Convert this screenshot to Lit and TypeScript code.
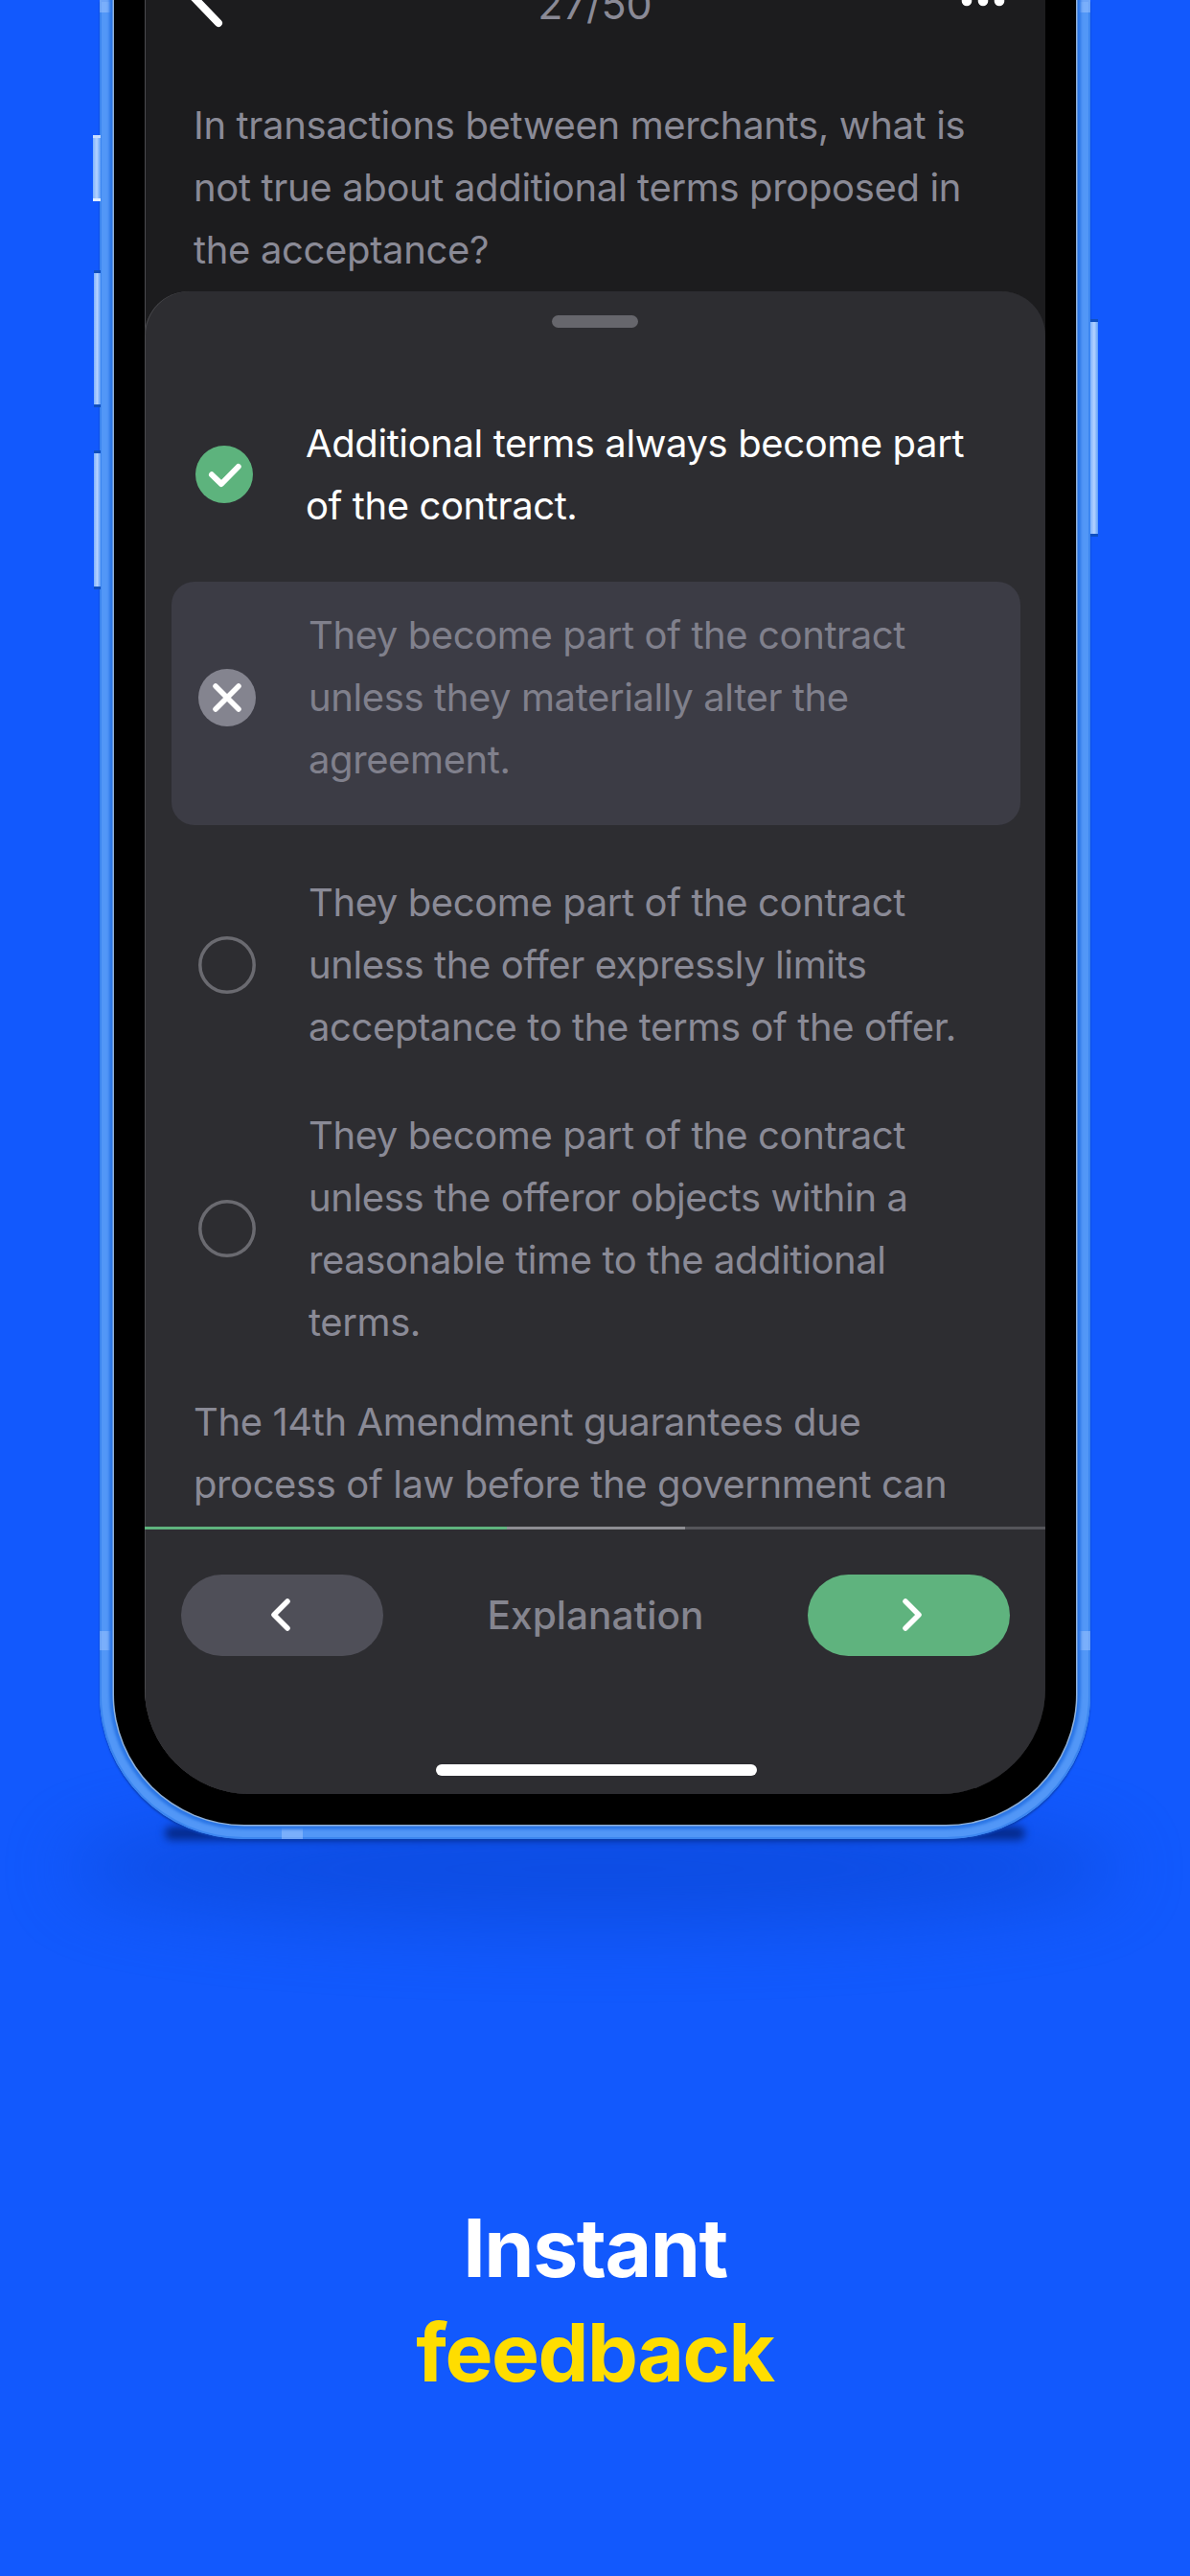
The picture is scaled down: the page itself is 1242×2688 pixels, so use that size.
import { LitElement, html, css, svg } from "lit";
import { customElement } from "lit/decorators.js";

@customElement("app-root")
export class AppRoot extends LitElement {
  static styles = css`
    :host {
      display: block;
      position: relative;
      width: 1242px;
      height: 2688px;
      overflow: hidden;
      background: #1259fd;
      font-family: Inter, "Noto Sans", sans-serif;
      -webkit-font-smoothing: antialiased;
    }
    .ground {
      position: absolute;
      left: 70px;
      top: 1890px;
      width: 1100px;
      height: 120px;
      background: #0a45d2;
      opacity: 0.6;
      border-radius: 50%;
      filter: blur(36px);
    }
    .contact {
      position: absolute;
      left: 172px;
      top: 1906px;
      width: 898px;
      height: 14px;
      background: #052a8c;
      border-radius: 8px;
      filter: blur(4px);
    }
    .phone {
      position: relative;
      box-sizing: border-box;
      width: 1034px;
      height: 1919px;
      margin-left: 104px;
      padding: 0 15px 15px;
      background: #5297f7;
      border-radius: 0 0 150px 150px;
      box-shadow: inset 0 0 0 2px #3c86f0, 0 2px 2px #0a3fb4;
    }
    .band {
      position: absolute;
      background: rgba(170, 205, 255, 0.45);
    }
    .band.tl { left: 0; top: 0; width: 15px; height: 13px; }
    .band.tr { right: 0; top: 0; width: 15px; height: 13px; }
    .band.ml { left: 0; top: 1702px; width: 15px; height: 20px; }
    .band.mr { right: 0; top: 1702px; width: 15px; height: 20px; }
    .band.bl { left: 190px; bottom: 0; width: 22px; height: 15px; }
    .side {
      position: absolute;
      background: linear-gradient(to right, #7fb2fc, #b4d2ff 50%, #5e9ef8);
      border-top: 3px solid #e3eeff;
      border-bottom: 3px solid #0f4fc0;
      box-sizing: border-box;
    }
    .side.s1 { left: -7px; top: 141px; width: 8px; height: 69px; border-top-color: #c9ddff; border-bottom-color: #e3eeff; }
    .side.s2 { left: -6px; top: 282px; width: 7px; height: 143px; border-top-color: #0f4fc0; }
    .side.s3 { left: -6px; top: 470px; width: 7px; height: 145px; border-top-color: #0f4fc0; }
    .side.s4 { right: -8px; top: 333px; width: 8px; height: 227px; border-top-color: #0f4fc0; }
    .bezel {
      box-sizing: border-box;
      height: 1904px;
      padding: 0 32px 32px;
      background: #000;
      border-radius: 0 0 136px 136px;
      position: relative;
      box-shadow: 0 0 0 1.5px #8fb0d8, 0 0 3px 5px #2b76e6;
    }
    .screen {
      display: flex;
      flex-direction: column;
      height: 1872px;
      background: #1c1c1e;
      border-radius: 0 0 110px 110px;
      overflow: hidden;
      box-shadow: inset 1px 0 0 #4a4a4e;
    }
    .top {
      position: relative;
      flex: none;
      height: 30px;
      overflow: hidden;
    }
    .top svg {
      position: absolute;
      left: 0;
      top: 0;
    }
    .count {
      position: absolute;
      left: 0;
      right: 0;
      bottom: 4px;
      text-align: center;
      line-height: 1;
      font-size: 43px;
      color: #8a8a96;
    }
    .question {
      flex: none;
      margin: 68px 0 11px;
      padding-left: 51px;
      font-size: 40px;
      letter-spacing: -0.35px;
      line-height: 65px;
      color: #8a8a96;
      height: 195px;
    }
    .sheet {
      flex: 1;
      display: flex;
      flex-direction: column;
      background: #2d2d31;
      border-radius: 46px 46px 0 0;
      box-shadow: inset 1px 0 0 #48484c;
      font-size: 40px;
      letter-spacing: -0.4px;
      line-height: 65px;
      color: #8a8a96;
    }
    .handle {
      align-self: center;
      width: 90px;
      height: 13px;
      margin-top: 25px;
      border-radius: 7px;
      background: #66666c;
    }
    .opt {
      display: flex;
      align-items: center;
    }
    .opt svg { flex: none; }
    .opt-text { margin-left: 55px; }
    .right {
      margin: 88px 0 0 53px;
      color: #fff;
    }
    .wrong {
      margin: 47px 26px 0 28px;
      padding: 23px 0 36px 28px;
      border-radius: 24px;
      background: #3c3c45;
      color: #80808c;
    }
    .plain { margin-left: 56px; }
    .third { margin-top: 48px; }
    .fourth { margin-top: 48px; }
    .explain {
      margin: 39px 0 0 51px;
    }
    .bar {
      display: flex;
      flex: none;
      height: 3px;
      margin-top: 12px;
      background: #55555a;
    }
    .bar i { display: block; }
    .bar .g { width: 378px; background: #5fb37e; }
    .bar .w { width: 186px; background: #8e8e93; }
    .foot {
      display: flex;
      align-items: center;
      justify-content: space-between;
      margin: 47px 37px 0 38px;
    }
    .btn {
      display: flex;
      align-items: center;
      justify-content: center;
      width: 211px;
      height: 85px;
      border-radius: 43px;
      background: #4f4f58;
    }
    .btn.go { background: #5fb37e; }
    .foot span {
      font-size: 40.6px;
      letter-spacing: 0;
      font-weight: 500;
      color: #85858f;
    }
    .home {
      align-self: center;
      width: 335px;
      height: 12px;
      margin: 113px 0 0 3px;
      border-radius: 6px;
      background: #fff;
    }
    .caption {
      margin-top: 372px;
      text-align: center;
      font-size: 84px;
      line-height: 109px;
      font-weight: 700;
      letter-spacing: -1.5px;
      color: #fff;
    }
    .caption b {
      display: block;
      font-weight: 700;
      color: #ffdd00;
    }
  `;

  private circle() {
    return html`<svg width="60" height="60" viewBox="0 0 60 60">
      <circle cx="30" cy="30" r="28.2" fill="none" stroke="#6a6a70" stroke-width="3.5"></circle>
    </svg>`;
  }

  private chev(d: string) {
    return html`<svg width="30" height="40" viewBox="0 0 30 40">
      ${svg`<path d=${d} fill="none" stroke="#fff" stroke-width="5.5" stroke-linecap="round" stroke-linejoin="round"></path>`}
    </svg>`;
  }

  render() {
    return html`
      <div class="ground"></div>
      <div class="contact"></div>
      <div class="phone">
        <div class="band tl"></div><div class="band tr"></div>
        <div class="band ml"></div><div class="band mr"></div>
        <div class="band bl"></div>
        <div class="side s1"></div><div class="side s2"></div>
        <div class="side s3"></div><div class="side s4"></div>
        <div class="bezel">
          <div class="screen">
            <div class="top">
              <svg width="940" height="30" viewBox="0 0 940 30">
                <path d="M52 -2 L77 24" fill="none" stroke="#fff" stroke-width="8" stroke-linecap="round"></path>
                <circle cx="858" cy="1" r="5.3" fill="#fff"></circle>
                <circle cx="875" cy="1" r="5.3" fill="#fff"></circle>
                <circle cx="892" cy="1" r="5.3" fill="#fff"></circle>
              </svg>
              <div class="count">27/50</div>
            </div>
            <div class="question">In transactions between merchants, what is<br />not true about additional terms proposed in<br />the acceptance?</div>
            <div class="sheet">
              <div class="handle"></div>
              <div class="opt right">
                <svg width="60" height="60" viewBox="0 0 60 60">
                  <circle cx="30" cy="30" r="30" fill="#5db37d"></circle>
                  <path d="M17 30.3 L27 40 L44.7 22" fill="none" stroke="#fff" stroke-width="6" stroke-linecap="round" stroke-linejoin="round"></path>
                </svg>
                <div class="opt-text">Additional terms always become part<br />of the contract.</div>
              </div>
              <div class="opt wrong">
                <svg width="60" height="60" viewBox="0 0 60 60">
                  <circle cx="30" cy="30" r="30" fill="#84848f"></circle>
                  <path d="M18 18 L42 42 M42 18 L18 42" fill="none" stroke="#fff" stroke-width="5.5" stroke-linecap="round"></path>
                </svg>
                <div class="opt-text">They become part of the contract<br />unless they materially alter the<br />agreement.</div>
              </div>
              <div class="opt plain third">
                ${this.circle()}
                <div class="opt-text">They become part of the contract<br />unless the offer expressly limits<br />acceptance to the terms of the offer.</div>
              </div>
              <div class="opt plain fourth">
                ${this.circle()}
                <div class="opt-text">They become part of the contract<br />unless the offeror objects within a<br />reasonable time to the additional<br />terms.</div>
              </div>
              <div class="explain">The 14th Amendment guarantees due<br />process of law before the government can</div>
              <div class="bar"><i class="g"></i><i class="w"></i></div>
              <div class="foot">
                <div class="btn">${this.chev("M20 5 L6 19 L20 33")}</div>
                <span>Explanation</span>
                <div class="btn go">${this.chev("M11 5 L25 19 L11 33")}</div>
              </div>
              <div class="home"></div>
            </div>
          </div>
        </div>
      </div>
      <div class="caption">Instant<b>feedback</b></div>
    `;
  }
}
